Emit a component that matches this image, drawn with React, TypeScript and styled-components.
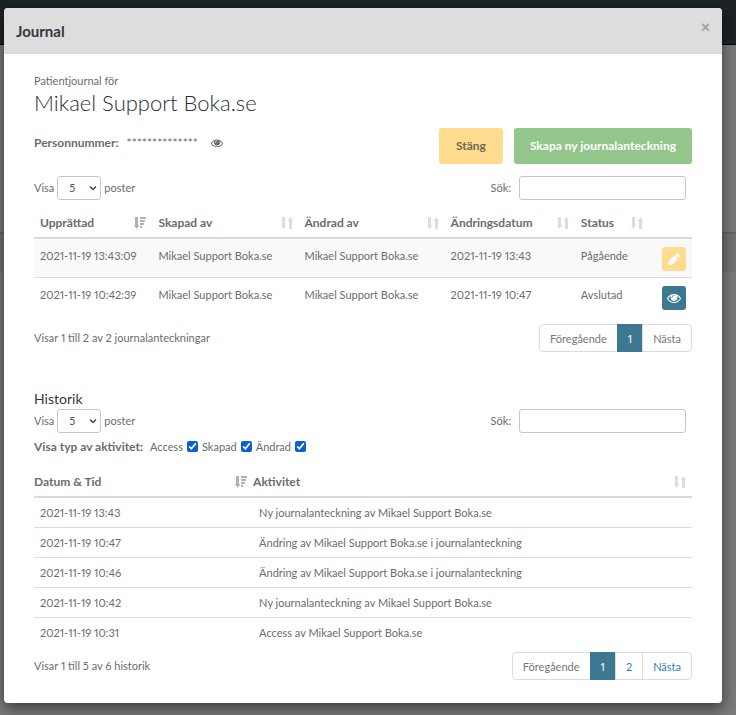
import React, { useState } from "react";
import styled, { createGlobalStyle, css } from "styled-components";

const GlobalStyle = createGlobalStyle`
  * { box-sizing: border-box; }
  body {
    margin: 0;
    min-height: 100vh;
    background: linear-gradient(#1d2225 0 44px, #000 44px 45px, #7c7b7b 45px 232px, #666 232px 234px, #737373 234px 272px, #7c7b7b 272px);
    font: 11px/18px Lato, "Open Sans", sans-serif;
    font-variant-numeric: proportional-nums;
    color: #6a6c6f;
  }
  button, input, select { font: inherit; color: inherit; }
`;

const Stage = styled.div`
  padding: 8px 14px 12px 4px;
`;

const Dialog = styled.section`
  background: #fff;
  border-radius: 4px;
  overflow: hidden;
  box-shadow: 0 5px 15px rgba(0, 0, 0, 0.55);
`;

const DialogHeader = styled.header`
  display: flex;
  justify-content: space-between;
  align-items: flex-start;
  height: 46px;
  padding: 12px;
  background: #dddddd;
  border-bottom: 1px solid #d8d8d8;
`;

const DialogTitle = styled.h1`
  margin: 0;
  font-size: 15px;
  line-height: 22px;
  font-weight: 700;
  color: #34373f;
`;

const CloseButton = styled.button`
  padding: 0;
  border: 0;
  background: none;
  color: #a0a0a0;
  font-size: 16px;
  line-height: 14px;
  font-weight: 900;
  cursor: pointer;
`;

const DialogBody = styled.div`
  padding: 18px 30px;
`;

const Bar = styled.div<{ $height: number }>`
  display: flex;
  justify-content: space-between;
  align-items: center;
  min-height: ${(p) => p.$height}px;
`;

const Kicker = styled.p`
  margin: 0;
`;

const PatientName = styled.h2`
  margin: 0 0 12px;
  font-size: 22px;
  line-height: 26px;
  font-weight: 300;
  color: #2c2f38;
`;

const PatientBar = styled(Bar)`
  margin-bottom: 12px;
`;

const Strong = styled.strong`
  font-size: 12px;
`;

const Identity = styled.div`
  display: flex;
  align-self: flex-start;
  gap: 8px;
  padding-top: 6px;
`;

const Mask = styled.span`
  font-size: 12px;
`;

const IconButton = styled.button`
  display: flex;
  align-items: center;
  padding: 0 5px;
  border: 0;
  background: none;
  cursor: pointer;
`;

const Actions = styled.div`
  display: flex;
  gap: 11px;
`;

const ActionButton = styled.button<{ $tone: "warn" | "ok" }>`
  height: 36px;
  min-width: 64px;
  padding: 0 16px;
  border: 0;
  border-radius: 3px;
  font-size: 12px;
  font-weight: 700;
  cursor: pointer;
  ${(p) =>
    p.$tone === "warn"
      ? css`
          background: #ffdb90;
          color: #6f6753;
        `
      : css`
          background: #93c68a;
          color: #fff;
        `}
`;

const Inline = styled.label`
  display: flex;
  align-items: center;
  gap: 3px;
`;

const SelectBox = styled.span`
  display: grid;
  align-items: center;

  & > * { grid-area: 1 / 1; }
  & > svg { justify-self: end; margin-right: 4px; pointer-events: none; }
`;

const Select = styled.select`
  appearance: none;
  width: 44px;
  height: 24px;
  padding: 0 11px;
  border: 1px solid #c4c6c9;
  border-radius: 3px;
  background: #fff;
  color: #555;
`;

const SearchLabel = styled.label`
  display: flex;
  align-items: center;
  gap: 8px;
  padding-right: 6px;
`;

const SearchInput = styled.input`
  width: 167px;
  height: 24px;
  padding: 0 8px;
  border: 1px solid #c4c6c9;
  border-radius: 3px;
  background: #fff;
`;

const Table = styled.table`
  width: 100%;
  table-layout: fixed;
  border-collapse: collapse;
`;

const NotesTable = styled(Table)`
  margin-top: 8px;
`;

const Col = styled.col<{ $share: number }>`
  width: ${(p) => p.$share}%;
`;

const HeadCell = styled.th<{ $flush?: boolean }>`
  height: 30px;
  padding: 0 6px;
  padding-left: ${(p) => (p.$flush ? 0 : 6)}px;
  border-bottom: 2px solid #d9dadb;
  text-align: left;
  font-size: 12px;
  font-weight: 700;
  white-space: nowrap;
`;

const HeadContent = styled.span`
  display: flex;
  justify-content: space-between;
  align-items: center;
`;

const NoteRow = styled.tr`
  height: 39px;
  & + & { border-top: 1px solid #ddd; }
  &:nth-child(odd) { background: #f9f9f9; }
`;

const NoteCell = styled.td`
  padding: 8px 6px 5px;
  vertical-align: top;
  white-space: nowrap;
`;

const RowButton = styled.button<{ $tone: "warn" | "info" }>`
  display: flex;
  align-items: center;
  justify-content: center;
  width: 24px;
  height: 24px;
  padding: 0;
  margin-left: auto;
  border: 0;
  border-radius: 3px;
  color: #fff;
  background: ${(p) => (p.$tone === "warn" ? "#ffdb90" : "#3c7891")};
  cursor: pointer;
`;

const HistoryRow = styled.tr`
  height: 30px;
  & + & { border-top: 1px solid #ddd; }
`;

const HistoryCell = styled.td`
  padding: 1px 6px 0;
`;

const Pager = styled.nav`
  display: flex;
`;

const PageLink = styled.a<{ $active?: boolean; $muted?: boolean }>`
  padding: 5px 10px 3px;
  border: 1px solid #ddd;
  margin-left: -1px;
  line-height: 18px;
  color: ${(p) => (p.$muted ? "#777" : "#337ab7")};
  text-decoration: none;

  &:first-child { border-radius: 4px 0 0 4px; }
  &:last-child { border-radius: 0 4px 4px 0; }

  ${(p) =>
    p.$active &&
    css`
      background: #3c7891;
      border-color: #3c7891;
      color: #fff;
    `}
`;

const SectionTitle = styled.h3`
  margin: 29px 0 0;
  font-size: 14px;
  line-height: 20px;
  font-weight: 400;
  color: #34373f;
`;

const Filters = styled.div`
  display: flex;
  align-items: center;
  gap: 4px;
  height: 28px;
  margin-bottom: 6px;
`;

const FiltersTitle = styled(Strong)`
  padding-right: 3px;
`;

const Check = styled.input`
  width: 11px;
  height: 11px;
  margin: 0 0 1px 1px;
  accent-color: #0b60d0;
`;

const EyeIcon = ({ size }: { size: number }) => (
  <svg width={size} height={size} viewBox="0 0 1792 1792" fill="currentColor" aria-hidden="true">
    <path d="M1664 960q-152-236-381-353 61 104 61 225 0 185-131.5 316.5t-316.5 131.5-316.5-131.5-131.5-316.5q0-121 61-225-229 117-381 353 133 205 333.5 326.5t434.5 121.5 434.5-121.5 333.5-326.5zm-720-384q0-20-14-34t-34-14q-125 0-214.5 89.5t-89.5 214.5q0 20 14 34t34 14 34-14 14-34q0-86 61-147t147-61q20 0 34-14t14-34zm848 384q0 34-20 69-140 230-376.5 368.5t-499.5 138.5-499.5-139-376.5-368q-20-35-20-69t20-69q140-229 376.5-368t499.5-139 499.5 139 376.5 368q20 35 20 69z" />
  </svg>
);

const PencilIcon = () => (
  <svg width="14" height="14" viewBox="0 0 14 14" fill="currentColor" aria-hidden="true">
    <path d="M1 13l1-4 5.500-5.500 3.500 3.500-5.500 5.500zM8.200 2.800l1.300-1.300q.6-.5 1.200 0l2 2q.5.600 0 1.200l-1.200 1.300z" />
  </svg>
);

const ChevronIcon = () => (
  <svg width="8" height="8" viewBox="0 0 8 8" fill="none" stroke="#444" strokeWidth="1.500" aria-hidden="true">
    <path d="M1 2.500l3 3 3-3" />
  </svg>
);

const SortIcon = ({ active }: { active?: boolean }) => (
  <svg width="12" height="12" viewBox="0 0 12 12" fill={active ? "#b0b2b4" : "#dcdddd"} aria-hidden="true">
    <path d="M1 0h3v8h1.500L2.500 12 0 8h1z" />
    {active ? (
      <path d="M6 0h6v2H6zM6 3h5v2H6zM6 6h4v2H6zM6 9h2v2H6z" />
    ) : (
      <path d="M8 12h3V4h1L9.500 0 6.500 4H8z" />
    )}
  </svg>
);

const noteColumns = [
  { label: "Upprättad", share: 18 },
  { label: "Skapad av", share: 22.2 },
  { label: "Ändrad av", share: 22.2 },
  { label: "Ändringsdatum", share: 19.8 },
  { label: "Status", share: 11.2 },
];

const notes = [
  { created: "2021-11-19 13:43:09", changed: "2021-11-19 13:43", status: "Pågående", open: true },
  { created: "2021-11-19 10:42:39", changed: "2021-11-19 10:47", status: "Avslutad", open: false },
];

const history = [
  ["2021-11-19 13:43", "Ny journalanteckning av Mikael Support Boka.se"],
  ["2021-11-19 10:47", "Ändring av Mikael Support Boka.se i journalanteckning"],
  ["2021-11-19 10:46", "Ändring av Mikael Support Boka.se i journalanteckning"],
  ["2021-11-19 10:42", "Ny journalanteckning av Mikael Support Boka.se"],
  ["2021-11-19 10:31", "Access av Mikael Support Boka.se"],
];

const TableControls = () => (
  <Bar $height={24}>
    <Inline>
      Visa
      <SelectBox>
        <Select defaultValue="5">
          <option>5</option>
          <option>10</option>
        </Select>
        <ChevronIcon />
      </SelectBox>
      poster
    </Inline>
    <SearchLabel>
      Sök:
      <SearchInput type="search" />
    </SearchLabel>
  </Bar>
);

const Filter = ({ label }: { label: string }) => {
  const [on, setOn] = useState(true);
  return (
    <Inline>
      {label}
      <Check type="checkbox" checked={on} onChange={() => setOn(!on)} />
    </Inline>
  );
};

export default function App() {
  return (
    <>
      <GlobalStyle />
      <Stage>
        <Dialog role="dialog" aria-labelledby="title">
          <DialogHeader>
            <DialogTitle id="title">Journal</DialogTitle>
            <CloseButton aria-label="Stäng fönstret">×</CloseButton>
          </DialogHeader>
          <DialogBody>
            <Kicker>Patientjournal för</Kicker>
            <PatientName>Mikael Support Boka.se</PatientName>
            <PatientBar $height={36}>
              <Identity>
                <Strong>Personnummer:</Strong>
                <Mask>**************</Mask>
                <IconButton aria-label="Visa personnummer">
                  <EyeIcon size={12} />
                </IconButton>
              </Identity>
              <Actions>
                <ActionButton $tone="warn">Stäng</ActionButton>
                <ActionButton $tone="ok">Skapa ny journalanteckning</ActionButton>
              </Actions>
            </PatientBar>
            <TableControls />
            <NotesTable>
              <colgroup>
                {noteColumns.map((c) => (
                  <Col key={c.label} $share={c.share} />
                ))}
                <Col $share={6.6} />
              </colgroup>
              <thead>
                <tr>
                  {noteColumns.map((c, i) => (
                    <HeadCell key={c.label}>
                      <HeadContent>
                        {c.label}
                        <SortIcon active={i === 0} />
                      </HeadContent>
                    </HeadCell>
                  ))}
                  <HeadCell />
                </tr>
              </thead>
              <tbody>
                {notes.map((n) => (
                  <NoteRow key={n.created}>
                    <NoteCell>{n.created}</NoteCell>
                    <NoteCell>Mikael Support Boka.se</NoteCell>
                    <NoteCell>Mikael Support Boka.se</NoteCell>
                    <NoteCell>{n.changed}</NoteCell>
                    <NoteCell>{n.status}</NoteCell>
                    <NoteCell>
                      <RowButton $tone={n.open ? "warn" : "info"} aria-label={n.open ? "Redigera" : "Visa"}>
                        {n.open ? <PencilIcon /> : <EyeIcon size={14} />}
                      </RowButton>
                    </NoteCell>
                  </NoteRow>
                ))}
              </tbody>
            </NotesTable>
            <Bar $height={44}>
              <span>Visar 1 till 2 av 2 journalanteckningar</span>
              <Pager>
                <PageLink href="#" $muted>Föregående</PageLink>
                <PageLink href="#" $active>1</PageLink>
                <PageLink href="#" $muted>Nästa</PageLink>
              </Pager>
            </Bar>
            <SectionTitle>Historik</SectionTitle>
            <TableControls />
            <Filters>
              <FiltersTitle>Visa typ av aktivitet:</FiltersTitle>
              <Filter label="Access" />
              <Filter label="Skapad" />
              <Filter label="Ändrad" />
            </Filters>
            <Table>
              <colgroup>
                <Col $share={33.3} />
                <Col $share={66.7} />
              </colgroup>
              <thead>
                <tr>
                  <HeadCell $flush>
                    <HeadContent>
                      Datum &amp; Tid
                      <SortIcon active />
                    </HeadContent>
                  </HeadCell>
                  <HeadCell $flush>
                    <HeadContent>
                      Aktivitet
                      <SortIcon />
                    </HeadContent>
                  </HeadCell>
                </tr>
              </thead>
              <tbody>
                {history.map(([time, text]) => (
                  <HistoryRow key={time}>
                    <HistoryCell>{time}</HistoryCell>
                    <HistoryCell>{text}</HistoryCell>
                  </HistoryRow>
                ))}
              </tbody>
            </Table>
            <Bar $height={38}>
              <span>Visar 1 till 5 av 6 historik</span>
              <Pager>
                <PageLink href="#" $muted>Föregående</PageLink>
                <PageLink href="#" $active>1</PageLink>
                <PageLink href="#">2</PageLink>
                <PageLink href="#">Nästa</PageLink>
              </Pager>
            </Bar>
          </DialogBody>
        </Dialog>
      </Stage>
    </>
  );
}
